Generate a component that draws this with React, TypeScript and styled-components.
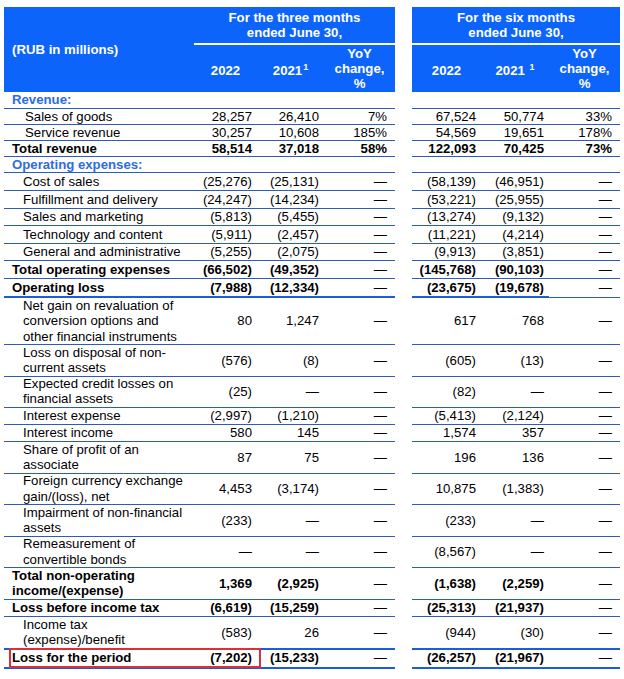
import React from "react";
import styled, { createGlobalStyle } from "styled-components";

const GlobalStyle = createGlobalStyle`
  body {
    margin: 0;
    background: #fff;
    font-family: "Liberation Sans", Arial, sans-serif;
  }
`;

const COLS = "190px 63px 67px 71px 17px 69px 68px 71px";
const HEAD_BLUE = "#0d64fb";
const THIN = "1px solid #2b5cb6";
const THICK = "2px solid #1b5fd7";
const D = "—";

const Sheet = styled.div`
  width: 616px;
  padding: 7px 4px 0;
  color: #000;
  font-size: 13.2px;
  line-height: 15.3px;
`;

const Head = styled.div`
  display: grid;
  grid-template-columns: ${COLS};
  grid-template-rows: 36px 2px 47px;
  color: #fff;
  font-weight: bold;
`;

const HeadCell = styled.div<{ $col: string; $row: string; $blank?: boolean }>`
  grid-column: ${(p) => p.$col};
  grid-row: ${(p) => p.$row};
  display: flex;
  align-items: center;
  justify-content: center;
  text-align: center;
  background: ${(p) => (p.$blank ? "#fff" : HEAD_BLUE)};
`;

const Caption = styled(HeadCell)`
  justify-content: flex-start;
  padding-left: 8px;
`;

const YearCell = styled(HeadCell)`
  padding-top: 4px;
`;

const Sup = styled.span`
  font-size: 9px;
  line-height: 9px;
  align-self: flex-start;
  margin-top: 14px;
  margin-left: 1px;
`;

const Label = styled.div<{ $indent: number; $section?: boolean }>`
  display: flex;
  align-items: center;
  padding-left: ${(p) => p.$indent}px;
  color: ${(p) => (p.$section ? "#2f6be3" : "inherit")};
  font-weight: ${(p) => (p.$section ? "bold" : "inherit")};
`;

const Num = styled.div<{ $pr: number }>`
  display: flex;
  align-items: center;
  justify-content: flex-end;
  padding-right: ${(p) => p.$pr}px;
  white-space: nowrap;
`;

const Dash = styled.span`
  font-weight: normal;
`;

const Gap = styled.div``;

const Row = styled.div<{ $h: number; $bold?: boolean; $thick?: boolean; $thinEnd?: boolean }>`
  position: relative;
  display: grid;
  grid-template-columns: ${COLS};
  height: ${(p) => p.$h}px;
  font-weight: ${(p) => (p.$bold ? "bold" : "normal")};

  ${Label}, ${Num} {
    box-sizing: border-box;
    border-bottom: ${(p) => (p.$thick ? THICK : THIN)};
  }

  ${Num}:last-of-type {
    ${(p) => (p.$thinEnd ? `border-bottom: ${THIN}; padding-bottom: 1px;` : "")}
  }
`;

const Highlight = styled.div`
  position: absolute;
  left: 5px;
  top: -1px;
  width: 252px;
  height: 20px;
  box-sizing: border-box;
  border: 2px solid #d8313d;
  pointer-events: none;
`;

type Line = {
  label: string[];
  v?: string[];
  h: number;
  indent?: number;
  section?: boolean;
  bold?: boolean;
  thick?: boolean;
  thinEnd?: boolean;
  mark?: boolean;
};

const rows: Line[] = [
  { label: ["Revenue:"], section: true, h: 17 },
  { label: ["Sales of goods"], indent: 21, v: ["28,257", "26,410", "7%", "67,524", "50,774", "33%"], h: 16 },
  { label: ["Service revenue"], indent: 21, v: ["30,257", "10,608", "185%", "54,569", "19,651", "178%"], h: 16 },
  { label: ["Total revenue"], bold: true, v: ["58,514", "37,018", "58%", "122,093", "70,425", "73%"], h: 16 },
  { label: ["Operating expenses:"], section: true, h: 16 },
  { label: ["Cost of sales"], indent: 19, v: ["(25,276)", "(25,131)", D, "(58,139)", "(46,951)", D], h: 18 },
  { label: ["Fulfillment and delivery"], indent: 19, v: ["(24,247)", "(14,234)", D, "(53,221)", "(25,955)", D], h: 18 },
  { label: ["Sales and marketing"], indent: 19, v: ["(5,813)", "(5,455)", D, "(13,274)", "(9,132)", D], h: 17 },
  { label: ["Technology and content"], indent: 19, v: ["(5,911)", "(2,457)", D, "(11,221)", "(4,214)", D], h: 18 },
  { label: ["General and administrative"], indent: 19, v: ["(5,255)", "(2,075)", D, "(9,913)", "(3,851)", D], h: 17 },
  { label: ["Total operating expenses"], bold: true, v: ["(66,502)", "(49,352)", D, "(145,768)", "(90,103)", D], h: 18 },
  {
    label: ["Operating loss"],
    bold: true,
    thick: true,
    thinEnd: true,
    v: ["(7,988)", "(12,334)", D, "(23,675)", "(19,678)", D],
    h: 19,
  },
  {
    label: ["Net gain on revaluation of", "conversion options and", "other financial instruments"],
    indent: 19,
    v: ["80", "1,247", D, "617", "768", D],
    h: 47,
  },
  { label: ["Loss on disposal of non-", "current assets"], indent: 19, v: ["(576)", "(8)", D, "(605)", "(13)", D], h: 31 },
  { label: ["Expected credit losses on", "financial assets"], indent: 19, v: ["(25)", D, D, "(82)", D, D], h: 31 },
  { label: ["Interest expense"], indent: 19, v: ["(2,997)", "(1,210)", D, "(5,413)", "(2,124)", D], h: 18 },
  { label: ["Interest income"], indent: 19, v: ["580", "145", D, "1,574", "357", D], h: 17 },
  { label: ["Share of profit of an", "associate"], indent: 19, v: ["87", "75", D, "196", "136", D], h: 31 },
  { label: ["Foreign currency exchange", "gain/(loss), net"], indent: 19, v: ["4,453", "(3,174)", D, "10,875", "(1,383)", D], h: 32 },
  { label: ["Impairment of non-financial", "assets"], indent: 19, v: ["(233)", D, D, "(233)", D, D], h: 31 },
  { label: ["Remeasurement of", "convertible bonds"], indent: 19, v: [D, D, D, "(8,567)", D, D], h: 32 },
  { label: ["Total non-operating", "income/(expense)"], bold: true, v: ["1,369", "(2,925)", D, "(1,638)", "(2,259)", D], h: 31 },
  { label: ["Loss before income tax"], bold: true, v: ["(6,619)", "(15,259)", D, "(25,313)", "(21,937)", D], h: 18 },
  { label: ["Income tax", "(expense)/benefit"], indent: 19, thick: true, v: ["(583)", "26", D, "(944)", "(30)", D], h: 32 },
  {
    label: ["Loss for the period"],
    bold: true,
    thick: true,
    mark: true,
    v: ["(7,202)", "(15,233)", D, "(26,257)", "(21,967)", D],
    h: 20,
  },
];

const padRight = [5, 5, 8, 5, 5, 8];

const Value = ({ text, pr }: { text: string; pr: number }) => (
  <Num $pr={pr}>{text === D ? <Dash>{D}</Dash> : text}</Num>
);

const StatementRow = ({ line }: { line: Line }) => {
  const vals = line.v ?? ["", "", "", "", "", ""];
  return (
    <Row $h={line.h} $bold={line.bold} $thick={line.thick} $thinEnd={line.thinEnd}>
      <Label $indent={line.indent ?? 8} $section={line.section}>
        <div>
          {line.label.map((t, i) => (
            <div key={i}>{t}</div>
          ))}
        </div>
      </Label>
      {vals.slice(0, 3).map((t, i) => (
        <Value key={i} text={t} pr={padRight[i]} />
      ))}
      <Gap />
      {vals.slice(3).map((t, i) => (
        <Value key={i + 3} text={t} pr={padRight[i + 3]} />
      ))}
      {line.mark && <Highlight />}
    </Row>
  );
};

const App = () => (
  <>
    <GlobalStyle />
    <Sheet>
      <Head>
        <Caption $col="1" $row="1 / 4">(RUB in millions)</Caption>
        <HeadCell $col="2 / 5" $row="1">
          For the three months
          <br />
          ended June 30,
        </HeadCell>
        <HeadCell $col="5" $row="1 / 4" $blank />
        <HeadCell $col="6 / 9" $row="1">
          For the six months
          <br />
          ended June 30,
        </HeadCell>
        <YearCell $col="2" $row="3">2022</YearCell>
        <YearCell $col="3" $row="3">
          2021<Sup>1</Sup>
        </YearCell>
        <HeadCell $col="4" $row="3">
          YoY
          <br />
          change,
          <br />%
        </HeadCell>
        <YearCell $col="6" $row="3">2022</YearCell>
        <YearCell $col="7" $row="3">
          2021&nbsp;<Sup>1</Sup>
        </YearCell>
        <HeadCell $col="8" $row="3">
          YoY
          <br />
          change,
          <br />%
        </HeadCell>
      </Head>
      {rows.map((line, i) => (
        <StatementRow key={i} line={line} />
      ))}
    </Sheet>
  </>
);

export default App;
